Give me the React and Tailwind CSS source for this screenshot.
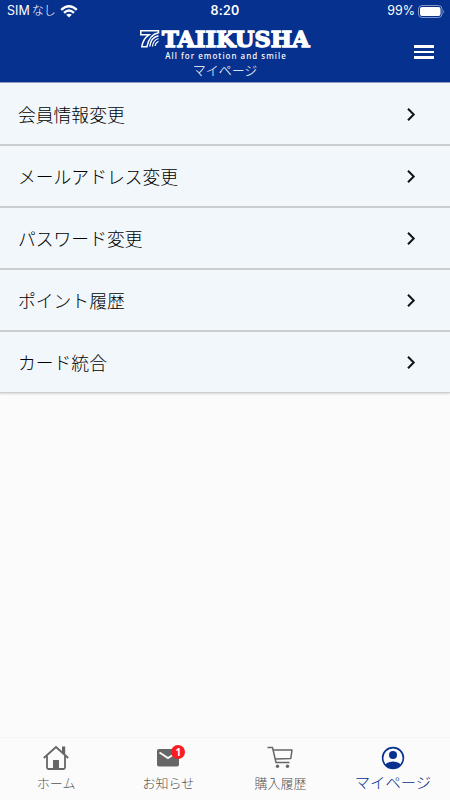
import React from "react";

const menuItems = [
  "会員情報変更",
  "メールアドレス変更",
  "パスワード変更",
  "ポイント履歴",
  "カード統合",
];

const HomeIcon = () => (
  <svg width="28" height="26" viewBox="0 0 28 26" fill="none" stroke="#666" strokeWidth="1.800">
    <path d="M1.800 13 14 2l12.200 11" />
    <path d="M5 11v11.500q0 1.500 1.500 1.500h15q1.500 0 1.500-1.500V11" />
    <path d="M20 1.500h3.200v8.500L20 7z" fill="#666" stroke="none" />
    <path d="M11 15h6v9h-6z" fill="#666" stroke="none" />
  </svg>
);

const MailIcon = () => (
  <svg width="22" height="18" viewBox="0 0 22 18">
    <rect width="22" height="17.500" rx="2" fill="#666" />
    <path d="M2.500 3.500 11 9l8.500-5.500" fill="none" stroke="#fafafa" strokeWidth="1.900" />
  </svg>
);

const CartIcon = () => (
  <svg width="27" height="23" viewBox="0 0 27 23" fill="none" stroke="#666" strokeWidth="1.500">
    <path d="M.5 1.500H5.500L9 16.500H22.500" />
    <path d="M6.200 4H25l-1.200 8.500L8.300 13" strokeLinejoin="round" />
    <circle cx="10.500" cy="20.300" r="1.700" fill="#666" stroke="none" />
    <circle cx="20.500" cy="20.300" r="1.700" fill="#666" stroke="none" />
  </svg>
);

const UserIcon = () => (
  <svg width="24" height="24" viewBox="0 0 24 24">
    <clipPath id="face">
      <circle cx="12" cy="12" r="10.500" />
    </clipPath>
    <g clipPath="url(#face)" fill="#06318f">
      <circle cx="12" cy="9" r="4" />
      <ellipse cx="12" cy="21" rx="8.500" ry="5.500" />
    </g>
    <circle cx="12" cy="12" r="10.400" fill="none" stroke="#06318f" strokeWidth="1.600" />
  </svg>
);

const Logo = () => (
  <div className="flex flex-col items-center">
    <div className="flex h-[22px] w-[170px]">
      <svg width="20" height="20" viewBox="0 0 20 20" fill="none" stroke="#fff">
        <path d="M.8 2.700H18.500V4.800C11.500 6 8.500 11 7 18.700H1.800C2.500 13.500 5 9.500 9 6.800H.8Z" strokeWidth="1.500" />
        <path d="M18.500 7.800C13.500 8.800 10.500 12.500 9.800 18.500" strokeWidth="1.400" />
        <path d="M18.500 10.500C15 11.500 13 14 12.400 18.500" strokeWidth="1.200" />
        <path d="M18.500 13.200C16.800 14 15.500 15.500 15 18" strokeWidth="1.200" />
      </svg>
      <svg className="overflow-visible" width="150" height="22" viewBox="20 0 150 22" fill="#fff">
        <text
          x="22"
          y="19.300"
          textLength="147.500"
          lengthAdjust="spacingAndGlyphs"
          stroke="#fff"
          strokeWidth="1.400"
          className="font-['DejaVu_Serif'] text-[22.500px] font-bold"
        >
          TAIIKUSHA
        </text>
      </svg>
    </div>
    <p className="h-[11px] pl-[2px] font-['Noto_Sans'] text-[8px] leading-[11px] font-medium tracking-[1.020px] whitespace-nowrap">
      All for emotion and smile
    </p>
  </div>
);

const tabs = [
  { label: "ホーム", icon: <HomeIcon /> },
  { label: "お知らせ", icon: <MailIcon />, badge: 1 },
  { label: "購入履歴", icon: <CartIcon /> },
  { label: "マイページ", icon: <UserIcon />, active: true },
];

const App = () => {
  return (
    <div className="flex h-[800px] w-full flex-col bg-[#fbfbfb] font-['Noto_Sans_CJK_JP',sans-serif]">
      <header className="z-10 h-[83px] shrink-0 border-b border-[#8f9bbd] bg-[#06318f] text-white">
        <div className="grid h-[22px] grid-cols-3 items-center pr-[5px] pl-[7px] font-['Inter','Noto_Sans_CJK_JP',sans-serif] text-[12.500px] leading-none">
          <div className="flex items-center">
            <span className="w-[50px] pt-px whitespace-nowrap">
              SIM<span className="ml-[2px] text-[12px] font-light">なし</span>
            </span>
            <svg className="ml-[3px]" width="18" height="13" viewBox="0 0 18 13" fill="none" stroke="#fff" strokeWidth="2.400">
              <path d="M1.200 4.800Q9-2.200 16.800 4.800" />
              <path d="M4 7.800Q9 3.400 14 7.800" />
              <path d="M9 12.500 6.200 9.700Q9 7.600 11.800 9.700Z" fill="#fff" stroke="none" />
            </svg>
          </div>
          <span className="pt-px pr-[2px] text-center text-[12.500px] font-semibold tracking-[0.200px]">8:20</span>
          <div className="flex items-center justify-end gap-[3px]">
            <span className="pt-px">99%</span>
            <svg width="27" height="13" viewBox="0 0 27 13">
              <rect x=".5" y=".5" width="23.500" height="12" rx="3.500" fill="none" stroke="#8296c9" />
              <rect x="2" y="2" width="20.500" height="9" rx="2" fill="#fff" />
              <path d="M25.300 4.500q1.700 2 0 4z" fill="#8296c9" />
            </svg>
          </div>
        </div>
        <div className="grid grid-cols-[1fr_170px_1fr]">
          <div className="col-start-2 flex flex-col items-center pt-[6px]">
            <Logo />
            <h1 className="text-[13px] leading-[17px] font-light">マイページ</h1>
          </div>
          <div className="flex justify-end pt-[23px] pr-4">
            <div className="flex w-5 flex-col gap-[3px]">
              <span className="h-[2.500px] bg-white"></span>
              <span className="h-[2.500px] bg-white"></span>
              <span className="h-[2.500px] bg-white"></span>
            </div>
          </div>
        </div>
      </header>

      <ul className="bg-[#f1f7fb] pt-px shadow-[0_1px_2px_rgba(0,0,0,0.15)]">
        {menuItems.map((item) => (
          <li
            key={item}
            className="flex h-[62px] items-center justify-between border-b-2 border-[#cbced0] pr-[34px] pl-[18px] text-[17.800px] font-light text-black last:h-[61px] last:border-b last:pt-px"
          >
            <span>{item}</span>
            <svg width="9" height="13" viewBox="0 0 9 13" fill="none" stroke="#10131c" strokeWidth="2">
              <path d="M1 .8 6.700 6.500 1 12.200" />
            </svg>
          </li>
        ))}
      </ul>

      <nav className="mt-auto grid h-[63px] grid-cols-4 border-t border-[#f6f6f6] bg-[#fbfbfb] pr-px">
        {tabs.map((tab) => (
          <div
            key={tab.label}
            className={`flex flex-col items-center ${tab.active ? "text-[15.300px] text-[#06318f]" : "text-[13px] text-[#555]"}`}
          >
            <div className="relative mt-[6px] flex h-[27px] items-center justify-center">
              {tab.icon}
              {tab.badge && (
                <span className="absolute top-px left-[14px] flex h-[14px] w-[14px] items-center justify-center rounded-full bg-[#f91c22] font-['Noto_Sans'] text-[10px] font-bold text-white">
                  {tab.badge}
                </span>
              )}
            </div>
            <span className={tab.active ? "-mt-px leading-[22px] font-light" : "mt-[2px] leading-[20px] font-light"}>
              {tab.label}
            </span>
          </div>
        ))}
      </nav>
    </div>
  );
};

export default App;
